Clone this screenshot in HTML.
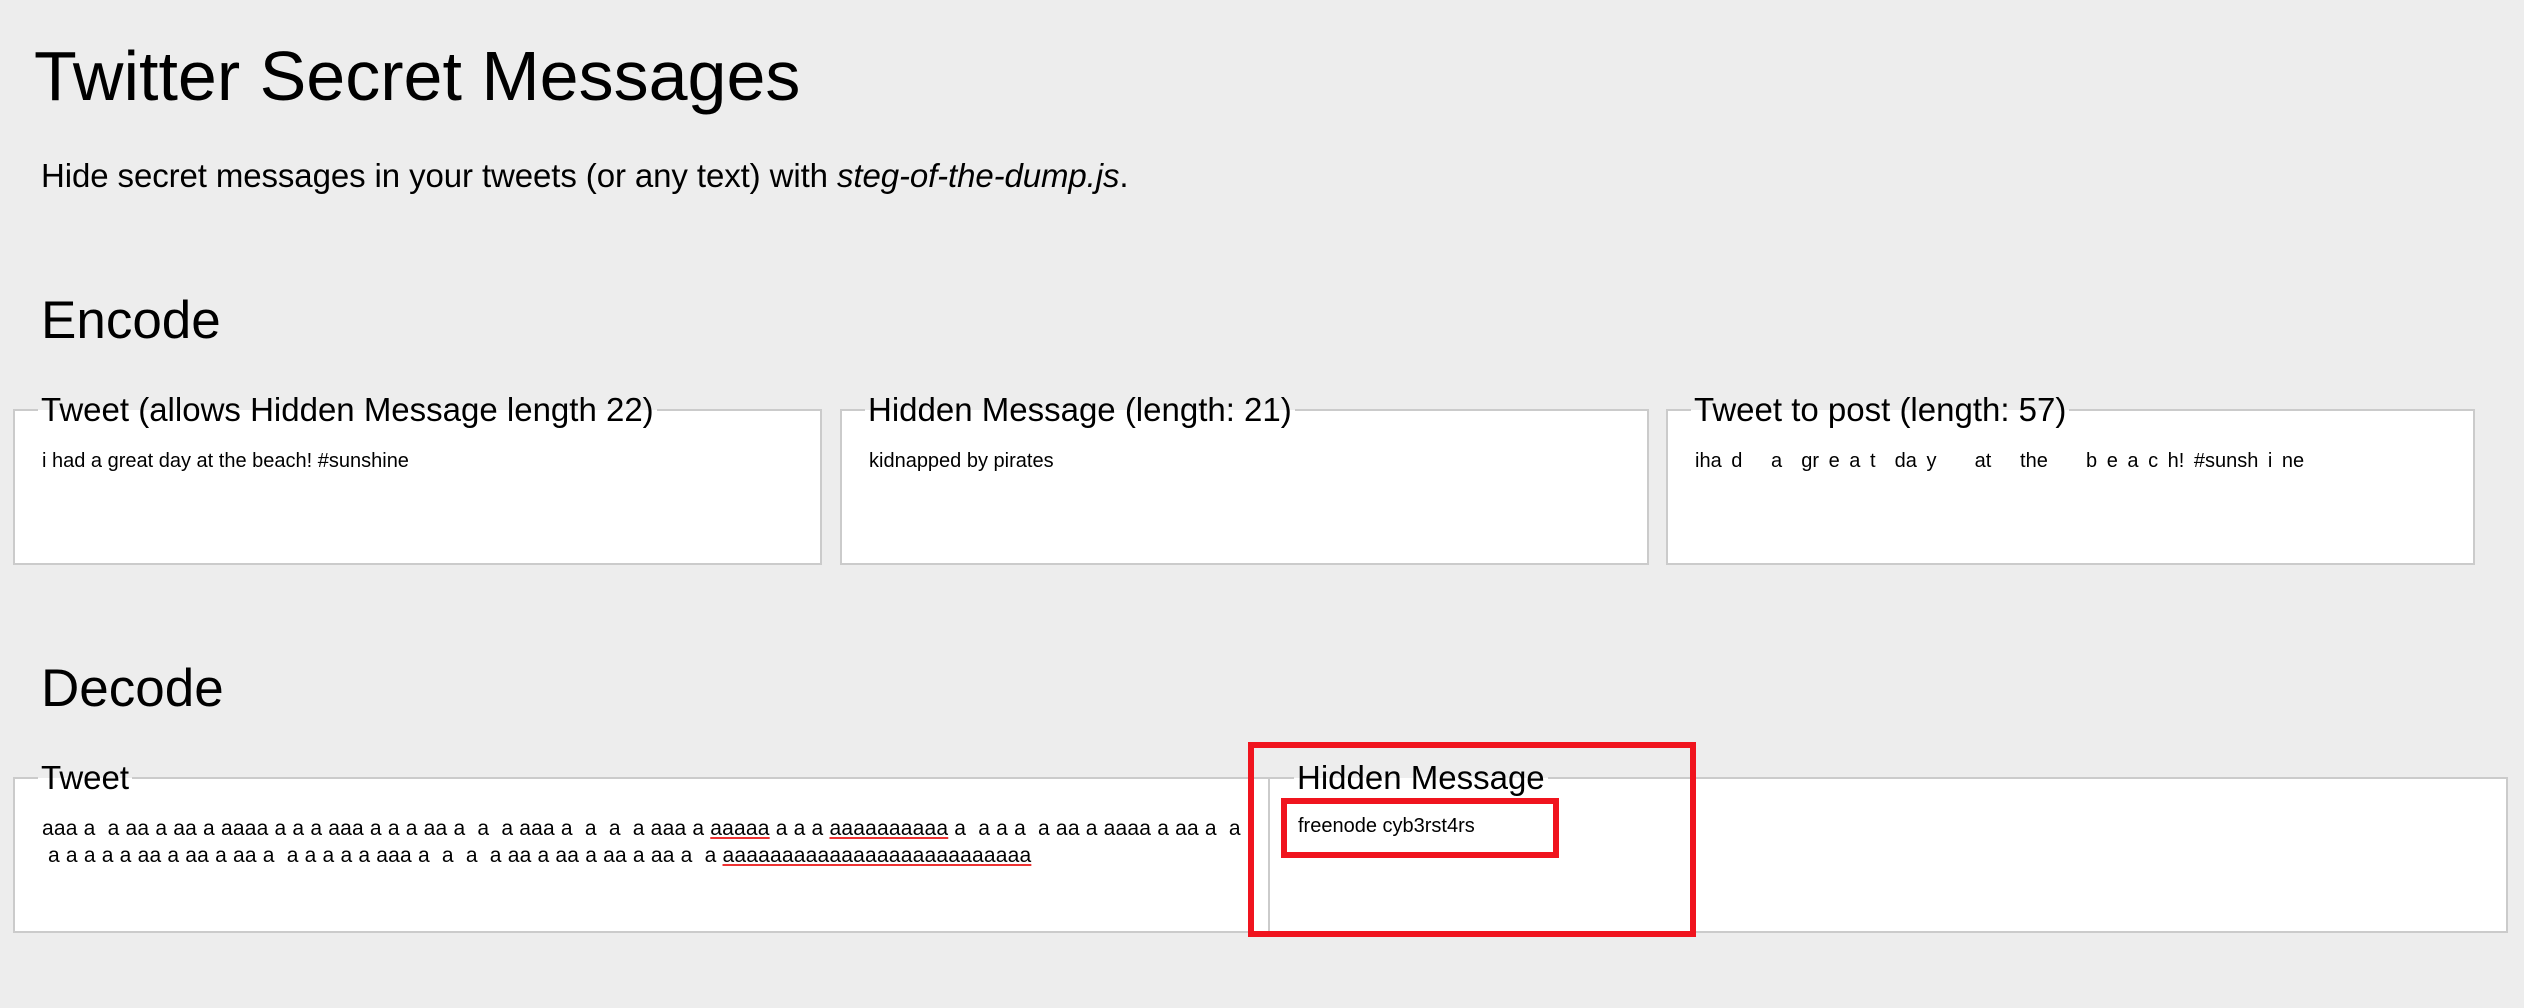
<!DOCTYPE html>
<html><head><meta charset="utf-8"><style>
body{margin:0;width:2524px;height:1008px;background:#ededed;font-family:"Liberation Sans",sans-serif;position:relative;overflow:hidden;color:#000}
.a{position:absolute;white-space:nowrap}
.box{position:absolute;background:#fff;border:2px solid #cbcbcb;box-sizing:border-box}
.leg{position:absolute;background:#ededed;font-size:33px;padding:0 3px;line-height:36px;white-space:nowrap}
.t{position:absolute;font-size:20px;white-space:nowrap}
.red{position:absolute;border:6px solid #f0141e;box-sizing:border-box}
</style></head><body>
<div class="a" style="left:34px;top:36px;font-size:70px;">Twitter Secret Messages</div>
<div class="a" style="left:41px;top:157px;font-size:33px;letter-spacing:-0.1px">Hide secret messages in your tweets (or any text) with <i>steg-of-the-dump.js</i>.</div>
<div class="a" style="left:41px;top:290px;font-size:53px;">Encode</div>

<div class="box" style="left:13px;top:409px;width:809px;height:156px"></div>
<div class="leg" style="left:38px;top:392px;background:linear-gradient(#ededed 50%,#fff 50%)">Tweet (allows Hidden Message length 22)</div>
<div class="t" style="left:42px;top:450px">i had a great day at the beach! #sunshine</div>

<div class="box" style="left:840px;top:409px;width:809px;height:156px"></div>
<div class="leg" style="left:865px;top:392px;background:linear-gradient(#ededed 50%,#fff 50%)">Hidden Message (length: 21)</div>
<div class="t" style="left:869px;top:450px">kidnapped by pirates</div>

<div class="box" style="left:1666px;top:409px;width:809px;height:156px"></div>
<div class="leg" style="left:1691px;top:392px;background:linear-gradient(#ededed 50%,#fff 50%)">Tweet to post (length: 57)</div>
<div class="t" style="left:1695px;top:450px;word-spacing:4px">iha d &nbsp; a &nbsp;gr e a t &nbsp;da y &nbsp; &nbsp;at &nbsp; the &nbsp; &nbsp;b e a c h! #sunsh i ne</div>

<div class="a" style="left:41px;top:658px;font-size:53px;">Decode</div>

<div class="box" style="left:13px;top:777px;width:1257px;height:156px"></div>
<div class="box" style="left:1268px;top:777px;width:1240px;height:156px"></div>
<div class="leg" style="left:38px;top:760px;background:linear-gradient(#ededed 50%,#fff 50%)">Tweet</div>
<div class="t" style="left:42px;top:817px;font-size:21px;letter-spacing:0.2px">aaa a &nbsp;a aa a aa a aaaa a a a aaa a a a aa a &nbsp;a &nbsp;a aaa a &nbsp;a &nbsp;a &nbsp;a aaa a <u style="text-decoration-color:#e33">aaaaa</u> a a a <u style="text-decoration-color:#e33">aaaaaaaaaa</u> a &nbsp;a a a &nbsp;a aa a aaaa a aa a &nbsp;a</div>
<div class="t" style="left:48px;top:844px;font-size:21px;letter-spacing:0.2px">a a a a a aa a aa a aa a &nbsp;a a a a a aaa a &nbsp;a &nbsp;a &nbsp;a aa a aa a aa a aa a &nbsp;a <u style="text-decoration-color:#e33">aaaaaaaaaaaaaaaaaaaaaaaaaa</u></div>
<div class="leg" style="left:1294px;top:760px;background:linear-gradient(#ededed 50%,#fff 50%)">Hidden Message</div>
<div class="t" style="left:1298px;top:815px">freenode cyb3rst4rs</div>

<div class="red" style="left:1248px;top:742px;width:448px;height:195px"></div>
<div class="red" style="left:1281px;top:798px;width:278px;height:60px"></div>
</body></html>
